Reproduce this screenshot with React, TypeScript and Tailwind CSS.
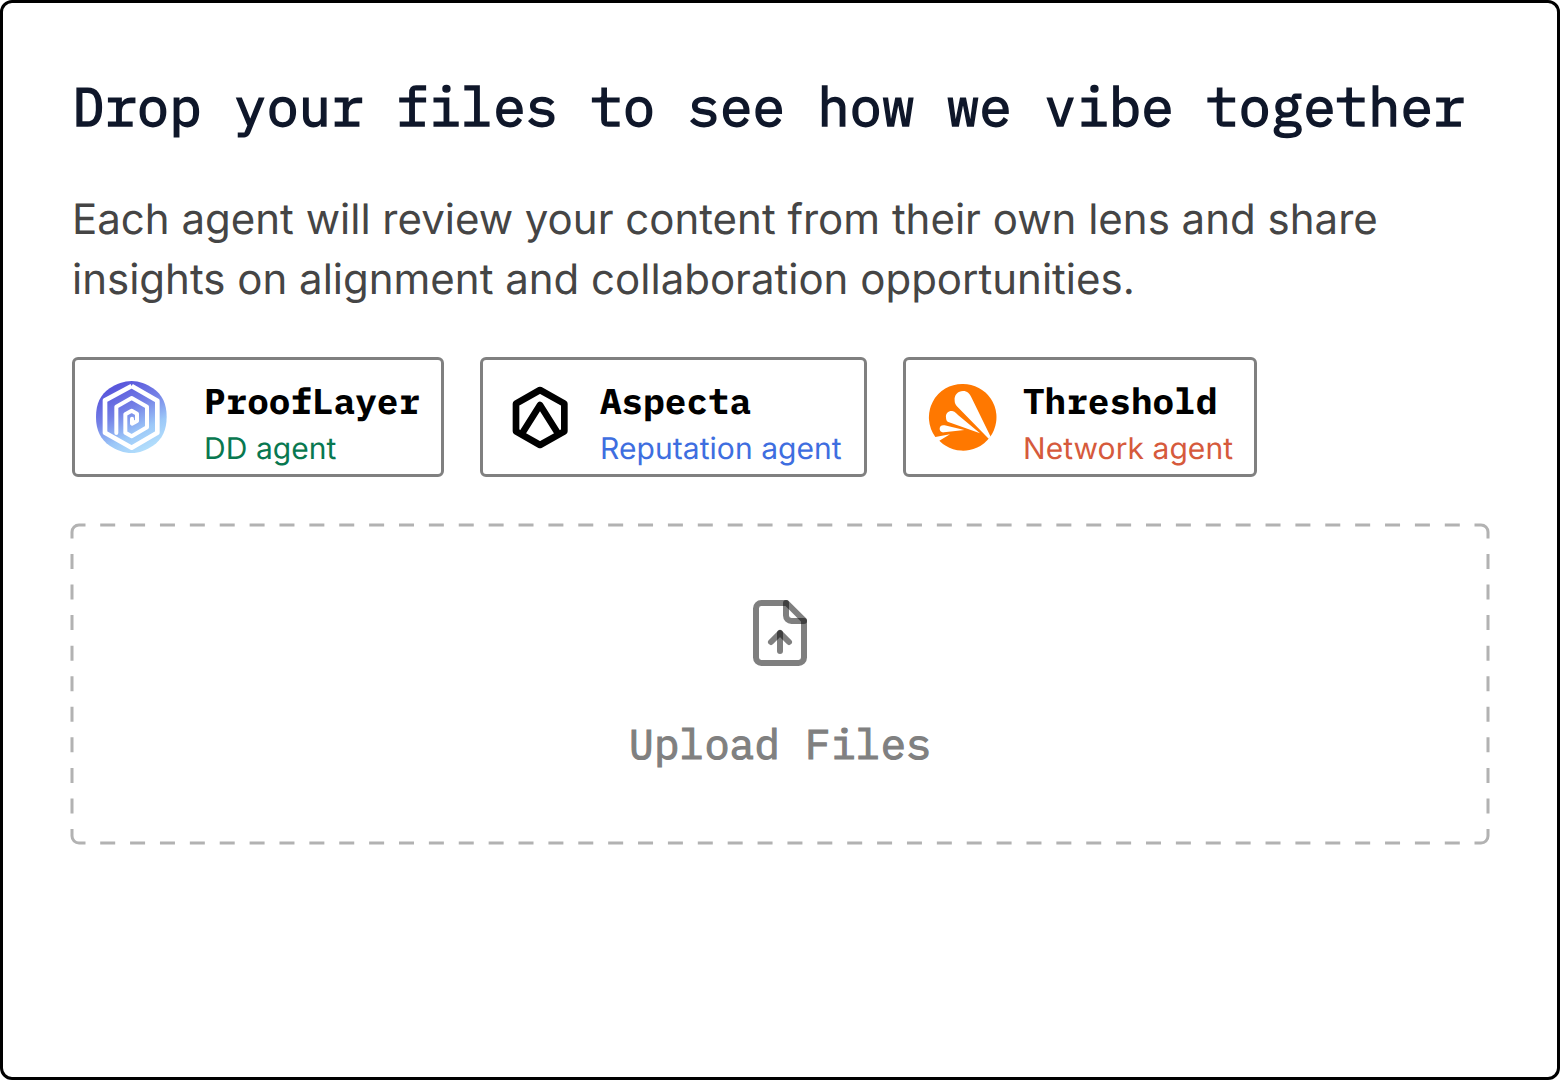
import React from "react";

function ProofLayerLogo() {
  return (
    <svg className="mr-9 size-[72px] shrink-0" viewBox="30 33 216 216" fill="none">
      <defs>
        <linearGradient id="proof" x1="85" y1="55" x2="180" y2="245" gradientUnits="userSpaceOnUse">
          <stop stopColor="#5a58dc" />
          <stop offset="0.35" stopColor="#7480e6" />
          <stop offset="0.7" stopColor="#9cc8f8" />
          <stop offset="1" stopColor="#b4e0fc" />
        </linearGradient>
      </defs>
      <path d="M137 33C160 33 181 42 201 55C229 74 242 102 242 141C242 180 229 208 201 227C181 240 160 249 137 249C114 249 91 240 71 227C43 208 30 180 30 141C30 102 43 74 71 55C91 42 114 33 137 33Z" fill="url(#proof)" />
      <path d="M137 48L214 92V188L137 233L57 188V91L137 48" stroke="white" strokeWidth="14" strokeLinejoin="round" />
      <path d="M91 189V110L137 84L183 110V172L137 199L118 188V133L137 122L153 131V153L138 161V146" stroke="white" strokeWidth="12" strokeLinejoin="round" strokeLinecap="round" />
    </svg>
  );
}

function AspectaLogo() {
  return (
    <svg className="mr-6 size-[72px] shrink-0" viewBox="12 15 216 216" fill="none" stroke="black" strokeWidth="20" strokeLinejoin="round">
      <path d="M120 42L193 83V166L120 207L48 166V83Z" />
      <path d="M67 171L120 87L173 171" />
    </svg>
  );
}

function ThresholdLogo() {
  return (
    <svg className="mr-6 size-[72px] shrink-0" viewBox="27 20 216 216">
      <path d="M135 29A100 100 0 1 1 64 199L96 180L52 188A100 100 0 0 1 135 29Z" fill="#ff7800" />
      <g fill="white">
        <path d="M110 79C108 62 120 50 135 50C148 50 155 58 160 69L218 187L212 193L116 95C112 90 110 85 110 79Z" />
        <path d="M84 130C82 116 94 108 105 111C111 113 115 117 120 122L186 177L93 144C87 142 84 137 84 130Z" />
        <path d="M65 165C64 156 71 151 80 153L139 167L78 174C70 175 66 171 65 165Z" />
      </g>
    </svg>
  );
}

const agents = [
  { name: "ProofLayer", role: "DD agent", color: "text-[#087850]", width: "w-[372px]", logo: <ProofLayerLogo /> },
  { name: "Aspecta", role: "Reputation agent", color: "text-[#3e6ee0]", width: "w-[387px]", logo: <AspectaLogo /> },
  { name: "Threshold", role: "Network agent", color: "text-[#d65a3c]", width: "w-[354px]", logo: <ThresholdLogo /> },
];

function DashedOutline() {
  return (
    <svg className="pointer-events-none absolute -top-[2px] -left-[2px] h-[322px] w-[1420px]" viewBox="70 523 1420 322" fill="none" stroke="#b2b2b2" strokeWidth="3">
      <path d="M72 538.5V532A7 7 0 0 1 79 525H85.5M1474.5 525H1481A7 7 0 0 1 1488 532V538.5M1488 829V836A7 7 0 0 1 1481 843H1474.5M85.5 843H79A7 7 0 0 1 72 836V829" />
      <path d="M100.2 525H1461M100.2 843H1461" strokeDasharray="15 14.88" />
      <path d="M72 554V814M1488 554V814" strokeDasharray="15 15.56" />
    </svg>
  );
}

function UploadIcon() {
  return (
    <svg className="size-[72px]" viewBox="0 0 24 24" fill="none" stroke="black" strokeOpacity="0.5" strokeWidth="2" strokeLinecap="round" strokeLinejoin="round">
      <path d="M14.2 2H5.8A1.8 1.8 0 0 0 4 3.8V20.2A1.8 1.8 0 0 0 5.8 22H18.2A1.8 1.8 0 0 0 20 20.2V7.8Z" />
      <path d="M14 2V6.2A1.8 1.8 0 0 0 15.8 8H20" />
      <path d="M12 12V18" />
      <path d="M9 15L12 12L15 15" />
    </svg>
  );
}

export default function App() {
  return (
    <div className="h-[1080px] w-[1560px] bg-white">
      <main className="flex h-full flex-col rounded-[12px] border-[3px] border-black px-[69px] pt-[67px] font-['Inter',sans-serif] [text-rendering:geometricPrecision]">
        <h1 className="h-[72px] whitespace-nowrap font-['IBM_Plex_Mono','Liberation_Mono',monospace] text-[54px] leading-[72px] text-[#0f172a] [-webkit-text-stroke:1.5px_#0f172a]">
          Drop your files to see how we vibe together
        </h1>
        <p className="mt-12 h-[120px] whitespace-nowrap text-[42px] leading-[60px] text-[#454545]">
          Each agent will review your content from their own lens and share
          <br />
          insights on alignment and collaboration opportunities.
        </p>
        <div className="mt-[47px] flex gap-9">
          {agents.map((agent) => (
            <div key={agent.name} className={`${agent.width} flex h-[120px] items-center rounded-[6px] border-[3px] border-[#808080] pl-[21px]`}>
              {agent.logo}
              <div className="mt-[15px] whitespace-nowrap">
                <div className="font-['IBM_Plex_Mono','Liberation_Mono',monospace] text-[36px] leading-[48px] font-bold text-black">{agent.name}</div>
                <div className={`${agent.color} text-[30px] leading-[48px] tracking-[0.06px]`}>{agent.role}</div>
              </div>
            </div>
          ))}
        </div>
        <button className="relative mt-12 flex h-[318px] w-[1416px] flex-col items-center pt-[72px]">
          <DashedOutline />
          <UploadIcon />
          <span className="mt-[47px] font-['IBM_Plex_Mono','Liberation_Mono',monospace] text-[42px] leading-[56px] text-[#808080] [-webkit-text-stroke:1.2px_#808080]">
            Upload Files
          </span>
        </button>
      </main>
    </div>
  );
}
